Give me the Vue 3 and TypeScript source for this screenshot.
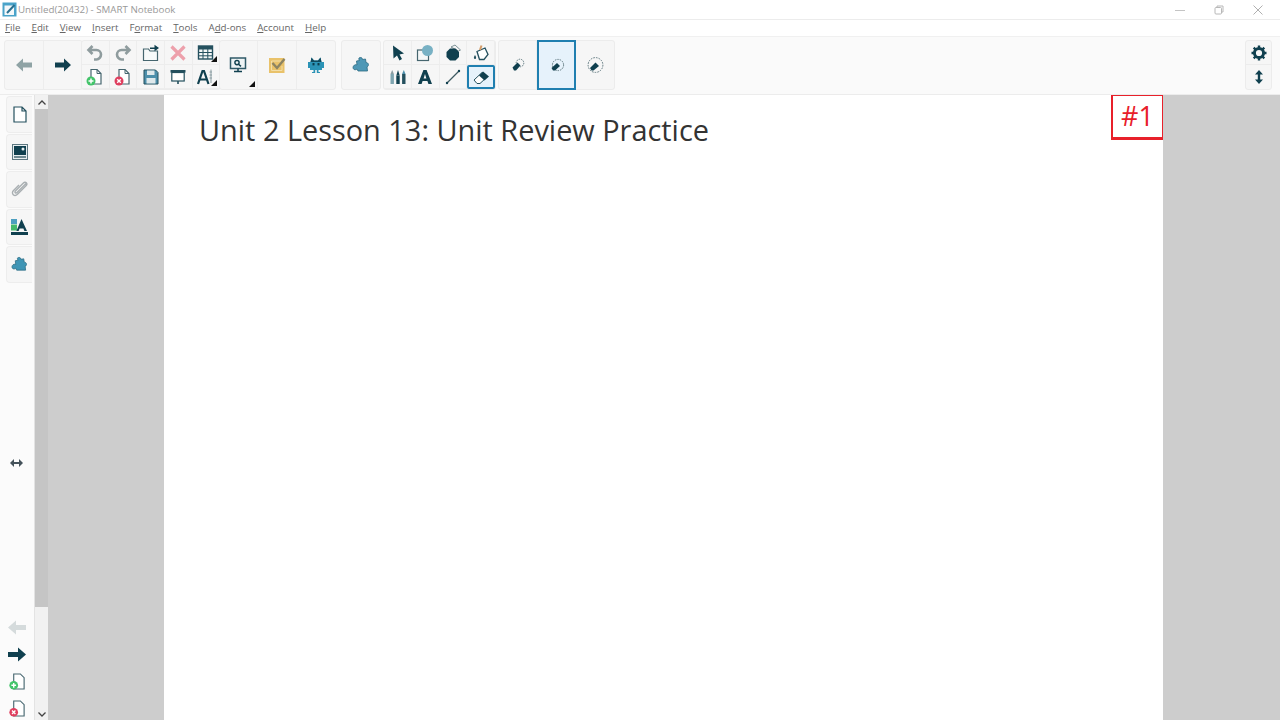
<script setup lang="ts">
const menus: { pre: string; key: string; post: string }[] = [
  { pre: '', key: 'F', post: 'ile' },
  { pre: '', key: 'E', post: 'dit' },
  { pre: '', key: 'V', post: 'iew' },
  { pre: '', key: 'I', post: 'nsert' },
  { pre: 'F', key: 'o', post: 'rmat' },
  { pre: '', key: 'T', post: 'ools' },
  { pre: 'A', key: 'd', post: 'd-ons' },
  { pre: '', key: 'A', post: 'ccount' },
  { pre: '', key: 'H', post: 'elp' },
]
</script>

<template>
  <div class="app">
    <header class="titlebar">
      <svg class="logo" width="15" height="15" viewBox="0 0 15 15">
        <rect x="0.5" y="0.5" width="14" height="14" fill="#4aa3c9" />
        <rect x="2.5" y="3.5" width="9.5" height="9.5" fill="#f4f8fa" />
        <path d="M5 11 L12.5 3" stroke="#2a6f8f" stroke-width="2" />
      </svg>
      <span class="doc-title">Untitled(20432) - SMART Notebook</span>
      <div class="winbtns">
        <svg width="10" height="10" viewBox="0 0 10 10"><path d="M0 5.5H10" stroke="#c4c4c4" /></svg>
        <svg width="10" height="10" viewBox="0 0 10 10" fill="none" stroke="#b8b8b8"><rect x="1" y="2.5" width="6.5" height="6.5" rx="1" /><path d="M3 2.5V1H9V7H7.5" /></svg>
        <svg width="10" height="10" viewBox="0 0 10 10"><path d="M.5 .5L9.5 9.5M9.5 .5L.5 9.5" stroke="#b0b0b0" /></svg>
      </div>
    </header>

    <nav class="menubar">
      <span v-for="m in menus" :key="m.pre + m.key + m.post" class="menu">{{ m.pre }}<u>{{ m.key }}</u>{{ m.post }}</span>
    </nav>

    <div class="toolbar">
      <div class="group">
        <button class="big">
          <svg width="18" height="16" viewBox="0 0 18 16"><path d="M1 8L8 1.5V5.5H17V10.5H8V14.5Z" fill="#8fa3a5" /></svg>
        </button>
        <button class="big">
          <svg width="18" height="16" viewBox="0 0 18 16"><path d="M17 8L10 1.5V5.5H1V10.5H10V14.5Z" fill="#10404f" /></svg>
        </button>
      </div>

      <div class="group grid five">
        <button>
          <svg width="18" height="18" viewBox="0 0 18 18" fill="none"><path d="M6.5 2L2.5 6L6.5 10M3 6H10.5C13 6 15 8 15 10.5C15 13 13 15.5 10.5 15.5H8" stroke="#8f9c9e" stroke-width="2.6" /></svg>
        </button>
        <button>
          <svg width="18" height="18" viewBox="0 0 18 18" fill="none"><path d="M11.5 2L15.5 6L11.5 10M15 6H7.5C5 6 3 8 3 10.5C3 13 5 15.5 7.5 15.5H10" stroke="#8f9c9e" stroke-width="2.6" /></svg>
        </button>
        <button>
          <svg width="18" height="18" viewBox="0 0 18 18" fill="none"><path d="M1.5 7V16.5H15.5V7H8L6.5 5H1.5Z" stroke="#46666f" stroke-width="1.2" fill="#f7fafa" /><path d="M8 3.5H12.5V.8L17 4L12.5 7.2V5H8Z" fill="#10404f" /></svg>
        </button>
        <button>
          <svg width="18" height="18" viewBox="0 0 18 18"><path d="M2.5 2.5L15.5 15.5M15.5 2.5L2.5 15.5" stroke="#eda0ab" stroke-width="3.2" /></svg>
        </button>
        <button class="corner">
          <svg width="18" height="18" viewBox="0 0 18 18" fill="none"><rect x="1.5" y="2" width="14" height="13" fill="#f5f8f8" stroke="#24505e" stroke-width="1.4" /><rect x="1.5" y="2" width="14" height="3.5" fill="#24505e" /><path d="M1.5 8.5H15.5M1.5 11.8H15.5M6 5V15M10.8 5V15" stroke="#24505e" /></svg>
        </button>
        <button>
          <svg width="18" height="18" viewBox="0 0 18 18"><path d="M5 1.5H11L15 5.5V16H5Z" fill="#fff" stroke="#46666f" stroke-width="1.2" /><path d="M11 1.5V5.5H15" fill="none" stroke="#46666f" /><circle cx="5" cy="13" r="4.5" fill="#43c46a" /><path d="M5 10.5V15.5M2.5 13H7.5" stroke="#fff" stroke-width="1.5" /></svg>
        </button>
        <button>
          <svg width="18" height="18" viewBox="0 0 18 18"><path d="M5 1.5H11L15 5.5V16H5Z" fill="#fff" stroke="#46666f" stroke-width="1.2" /><path d="M11 1.5V5.5H15" fill="none" stroke="#46666f" /><circle cx="5" cy="13" r="4.5" fill="#df3f5f" /><path d="M3.2 11.2L6.8 14.8M6.8 11.2L3.2 14.8" stroke="#fff" stroke-width="1.4" /></svg>
        </button>
        <button>
          <svg width="18" height="18" viewBox="0 0 18 18"><path d="M2 2H13.5L16 4.5V16H2Z" fill="#4d8fab" stroke="#24505e" /><rect x="5" y="2.5" width="7.5" height="4.5" fill="#dfe9ec" /><rect x="4.5" y="10" width="9" height="5.5" fill="#dfe9ec" /></svg>
        </button>
        <button>
          <svg width="18" height="18" viewBox="0 0 18 18" fill="none"><rect x="1.5" y="2" width="15" height="2.6" fill="#24505e" /><rect x="2.8" y="4.5" width="12.4" height="8.5" fill="#fff" stroke="#24505e" stroke-width="1.2" /><path d="M9 13V16" stroke="#24505e" stroke-width="1.6" /></svg>
        </button>
        <button class="corner">
          <svg width="18" height="18" viewBox="0 0 18 18" fill="none"><path d="M1 16L5.5 3H7L11.5 16M3 11.5H9.5" stroke="#10404f" stroke-width="2.2" /><path d="M14 1.5V15M12.5 4H15M12.5 7H15M12.5 10H15" stroke="#8a9ca1" /></svg>
        </button>
      </div>

      <div class="group trio">
        <button class="big corner">
          <svg width="18" height="18" viewBox="0 0 18 18" fill="none"><rect x="1.5" y="2" width="15" height="10.5" fill="#eef4f5" stroke="#2f5a68" stroke-width="1.5" /><circle cx="8" cy="6.6" r="2.1" stroke="#10404f" stroke-width="1.4" /><path d="M9.5 8.2L12 10.4M9 12.5V15M5 15.5H13" stroke="#10404f" stroke-width="1.5" /></svg>
        </button>
        <button class="big">
          <svg width="18" height="18" viewBox="0 0 18 18" fill="none"><rect x="1" y="2" width="15.5" height="15" fill="#e9c26a" /><path d="M3.5 5H13M3.5 5V14.5H14V10" stroke="#f3dea8" stroke-width="1" /><path d="M4.5 7L9 12L16.5 3" stroke="#8d8462" stroke-width="2.4" /></svg>
        </button>
        <button class="big">
          <svg width="18" height="18" viewBox="0 0 18 18"><path d="M4.5 1.5L7 4.5H11L13.5 1.5L14.5 6H17V12H15V14H11.5V16H13V17H9.8V14H8.2V17H5V16H6.5V14H3V12H1V6H3.5Z" fill="#2b93b6" /><path d="M4.5 1.5L7 4.5H11L13.5 1.5L14.5 6H3.5Z" fill="#0f4a5e" /><rect x="5.5" y="7" width="2" height="2.4" fill="#0c3d4d" /><rect x="10.5" y="7" width="2" height="2.4" fill="#0c3d4d" /></svg>
        </button>
      </div>

      <div class="group solo">
        <button class="big">
          <svg width="18" height="18" viewBox="0 0 18 18"><path d="M7 2C8.5 1 10.5 1.5 10.5 3.5L13.5 3L14 6.5C16.5 6.5 17.5 9.5 15 11L15.5 15H6L5 13C2.5 15 0 12.5 1.5 10C2.5 8.5 4 8.5 5 9L4.5 5L7.5 4.5C7 3.8 6.5 3 7 2Z" fill="#4f98b6" stroke="#2b6a82" stroke-width=".8" /></svg>
        </button>
      </div>

      <div class="group grid four">
        <button>
          <svg width="18" height="18" viewBox="0 0 18 18"><path d="M4 1.5L15 9.5L10.5 10.5L13 15L10.5 16.5L8 11.5L4.5 14.5Z" fill="#10404f" /></svg>
        </button>
        <button>
          <svg width="18" height="18" viewBox="0 0 18 18"><rect x="1.5" y="6" width="11" height="10.5" fill="#f4f7f7" stroke="#46666f" stroke-width="1.2" /><circle cx="11.5" cy="6.5" r="5.5" fill="#78b1c4" /></svg>
        </button>
        <button>
          <svg width="18" height="18" viewBox="0 0 18 18"><path d="M7 3L11 1L16.5 6L14.5 7Z" fill="#f4f4f4" stroke="#5f7a80" stroke-width=".8" /><path d="M6 4.5H11.5L15 8V13L11.5 16.5H6L2.5 13V8Z" fill="#10404f" /></svg>
        </button>
        <button>
          <svg width="18" height="18" viewBox="0 0 18 18" fill="none"><path d="M5 7.5L13 4L16 10.5L12 15.5H7.5Z" fill="#fff" stroke="#24505e" stroke-width="1.3" /><path d="M8 6L9.5 1.5" stroke="#d49b66" stroke-width="2" /><path d="M3 11C1.5 13 1.5 15 3 15C4.5 15 4.5 13 3 11Z" fill="#24505e" /></svg>
        </button>
        <button>
          <svg width="18" height="18" viewBox="0 0 18 18"><rect x="1.5" y="6" width="3.4" height="10" fill="#7ea5b0" /><path d="M1.5 6L3.2 2L4.9 6Z" fill="#8a9ca1" /><rect x="7.3" y="7.5" width="3.4" height="8.5" fill="#10404f" /><path d="M7.3 7.5L9 2L10.7 7.5Z" fill="#10404f" /><rect x="13.1" y="6" width="3.4" height="10" fill="#24505e" /><path d="M13.1 6L14.8 2L16.5 6Z" fill="#4d8fab" /></svg>
        </button>
        <button>
          <svg width="18" height="18" viewBox="0 0 18 18"><path d="M7.4 2H10.6L16 16H12.4L11.4 13H6.6L5.6 16H2Z M9 6L7.6 10.4H10.4Z" fill="#10404f" fill-rule="evenodd" /></svg>
        </button>
        <button>
          <svg width="18" height="18" viewBox="0 0 18 18"><path d="M3 15L15 3" stroke="#3f5a62" stroke-width="1.2" /><circle cx="3" cy="15" r="1.2" fill="#10404f" /><circle cx="15" cy="3" r="1.2" fill="#10404f" /></svg>
        </button>
        <button class="active">
          <svg width="18" height="18" viewBox="0 0 18 18"><path d="M2 12L10 4.5L15 9L8 15.5H5Z" fill="#fff" stroke="#24505e" /><path d="M7 7.5L11 3.5L17 8.5L12.5 12.5Z" fill="#10404f" /></svg>
        </button>
      </div>

      <div class="group">
        <button class="big">
          <svg width="14" height="14" viewBox="0 0 14 14" fill="none"><circle cx="9" cy="5" r="3.8" stroke="#5f787f" stroke-width="1" stroke-dasharray="1.4 .9" /><path d="M1.5 9.5L6.5 4.5L9.5 7.5L5 12.5H3Z" fill="#10404f" /></svg>
        </button>
        <button class="big selected">
          <svg width="16" height="16" viewBox="0 0 16 16" fill="none"><circle cx="9" cy="8" r="5.6" stroke="#5f787f" stroke-width="1" stroke-dasharray="1.5 1" /><path d="M2.5 11L8 6L11 9L6 13.5H4Z" fill="#10404f" /></svg>
        </button>
        <button class="big">
          <svg width="18" height="18" viewBox="0 0 18 18" fill="none"><circle cx="9.5" cy="9" r="7.4" stroke="#5f787f" stroke-width="1" stroke-dasharray="1.6 1.1" /><path d="M4 12L9.5 6.5L13 10L7.5 14.5H5.5Z" fill="#10404f" /></svg>
        </button>
      </div>

      <div class="group settings">
        <button>
          <svg width="16" height="16" viewBox="0 0 16 16" fill="none"><circle cx="8" cy="8" r="4.6" stroke="#10404f" stroke-width="3" /><path d="M8 .5V3M8 13V15.5M.5 8H3M13 8H15.5M2.7 2.7L4.5 4.5M11.5 11.5L13.3 13.3M13.3 2.7L11.5 4.5M4.5 11.5L2.7 13.3" stroke="#10404f" stroke-width="2.4" /></svg>
        </button>
        <button>
          <svg width="10" height="14" viewBox="0 0 10 14"><path d="M5 0L9 4.5H6.2V9.5H9L5 14L1 9.5H3.8V4.5H1Z" fill="#10404f" /></svg>
        </button>
      </div>
    </div>

    <main class="workspace">
      <aside class="rail">
        <div class="tabs">
          <button>
            <svg width="14" height="17" viewBox="0 0 14 17"><path d="M1 1H9L13 5V16H1Z M9 1V5H13" fill="#fff" stroke="#24505e" stroke-width="1.2" /></svg>
          </button>
          <button>
            <svg width="16" height="16" viewBox="0 0 16 16"><rect x=".5" y=".5" width="15" height="15" fill="#e7eef0" stroke="#5c7780" /><rect x="2" y="2" width="12" height="9" fill="#10404f" /><circle cx="11" cy="5" r="1.5" fill="#e7eef0" /><rect x="2" y="12" width="12" height="2" fill="#6f8a92" /></svg>
          </button>
          <button>
            <svg width="18" height="18" viewBox="0 0 18 18" fill="none"><path d="M15 3.5L6 12.5C4.8 13.7 3.2 12.2 4.4 11L12.4 3C14.5 .9 17.2 3.6 15 5.8L6.5 14.3C3.5 17.3 -.5 13.5 2.5 10.5L8 5" stroke="#a9afb2" stroke-width="1.4" /></svg>
          </button>
          <button>
            <svg width="17" height="18" viewBox="0 0 17 18"><rect x="0" y="1" width="6" height="5" fill="#4d9fc0" /><rect x="0" y="6.5" width="6" height="6" fill="#45b96c" /><path d="M10.5 1L16 13H13.4L12.4 10.4H8.6L7.6 13H5.4Z" fill="#10404f" /><rect x="0" y="14" width="17" height="3" fill="#10404f" /></svg>
          </button>
          <button>
            <svg width="17" height="17" viewBox="0 0 18 18"><path d="M7 2C8.5 1 10.5 1.5 10.5 3.5L13.5 3L14 6.5C16.5 6.5 17.5 9.5 15 11L15.5 15H6L5 13C2.5 15 0 12.5 1.5 10C2.5 8.5 4 8.5 5 9L4.5 5L7.5 4.5C7 3.8 6.5 3 7 2Z" fill="#3f95b5" stroke="#2b6a82" stroke-width=".8" /></svg>
          </button>
        </div>
        <div class="resize">
          <svg width="13" height="8" viewBox="0 0 13 8"><path d="M0 4L4 0V3H9V0L13 4L9 8V5H4V8Z" fill="#44525a" /></svg>
        </div>
        <div class="page-nav">
          <svg width="20" height="17" viewBox="0 0 20 16"><path d="M1 8L9 1V5.5H19V10.5H9V15Z" fill="#d5dbdc" /></svg>
          <svg width="20" height="17" viewBox="0 0 20 16"><path d="M19 8L11 1V5.5H1V10.5H11V15Z" fill="#10404f" /></svg>
          <svg width="17" height="17" viewBox="0 0 18 18"><path d="M5 1H12L16 5V17H5Z" fill="#fff" stroke="#46666f" stroke-width="1.2" /><circle cx="5" cy="13" r="4.6" fill="#43c46a" /><path d="M5 10.5V15.5M2.5 13H7.5" stroke="#fff" stroke-width="1.5" /></svg>
          <svg width="17" height="17" viewBox="0 0 18 18"><path d="M5 1H12L16 5V17H5Z" fill="#fff" stroke="#46666f" stroke-width="1.2" /><circle cx="5" cy="13" r="4.6" fill="#df3f5f" /><path d="M3.2 11.2L6.8 14.8M6.8 11.2L3.2 14.8" stroke="#fff" stroke-width="1.4" /></svg>
        </div>
      </aside>

      <div class="scrollbar">
        <svg class="chev" width="8" height="5" viewBox="0 0 8 5"><path d="M.5 4.5L4 1L7.5 4.5" fill="none" stroke="#444" stroke-width="1.3" /></svg>
        <div class="thumb-wrap"><div class="thumb"></div></div>
        <svg class="chev" width="8" height="5" viewBox="0 0 8 5"><path d="M.5 .5L4 4L7.5 .5" fill="none" stroke="#444" stroke-width="1.3" /></svg>
      </div>

      <section class="canvas">
        <article class="page">
          <h1>Unit 2 Lesson 13: Unit Review Practice</h1>
          <div class="badge">#1</div>
        </article>
      </section>
    </main>
  </div>
</template>

<style scoped>
.app {
  width: 1280px;
  height: 720px;
  display: flex;
  flex-direction: column;
  overflow: hidden;
  background: #fff;
  font-family: "Open Sans", "Noto Sans", sans-serif;
}
button {
  padding: 0;
  margin: 0;
  border: 0;
  background: none;
  display: flex;
  align-items: center;
  justify-content: center;
}
.titlebar {
  height: 19px;
  flex: none;
  display: flex;
  align-items: center;
  padding-left: 2px;
  font-size: 9.75px;
  color: #999;
}
.logo {
  margin-right: 1px;
}
.doc-title {
  white-space: nowrap;
}
.winbtns {
  margin-left: auto;
  width: 105px;
  padding-right: 17px;
  box-sizing: border-box;
  display: flex;
  justify-content: space-between;
}
.menubar {
  height: 17px;
  flex: none;
  display: flex;
  gap: 11px;
  align-items: center;
  padding: 0 0 2px 5px;
  border-top: 1px solid #ececec;
  box-sizing: border-box;
  font-size: 9.75px;
  color: #666;
}
.menu {
  white-space: nowrap;
}
.toolbar {
  height: 59px;
  flex: none;
  box-sizing: border-box;
  padding: 3px 8px 4px 4px;
  display: flex;
  background: #fafafa;
  border-top: 1px solid #f0f0f0;
  border-bottom: 1px solid #ececec;
}
.group {
  display: flex;
  background: #f6f6f6;
  border: 1px solid #ececec;
  border-radius: 3px;
  height: 50px;
  box-sizing: border-box;
}
.big {
  width: 38.5px;
  height: 100%;
  flex: none;
  position: relative;
  border-right: 1px solid #ededed;
  box-sizing: border-box;
}
.big:last-child {
  border-right: 0;
}
.selected {
  height: 50px;
  margin-top: -1px;
  border: 2px solid #1f7fb0;
  background: #e6f2fb;
}
.grid {
  display: grid;
  grid-template-rows: 1fr 1fr;
}
.grid button {
  border-right: 1px solid #ededed;
  border-bottom: 1px solid #ededed;
  box-sizing: border-box;
  position: relative;
}
.five {
  grid-template-columns: repeat(5, 27.7px);
  margin-left: -2px;
}
.trio {
  margin-left: -2.75px;
}
.solo {
  margin-left: 4.5px;
}
.four {
  grid-template-columns: repeat(4, 27.7px);
  margin-left: 2px;
  margin-right: 2px;
}
.corner::after {
  content: "";
  position: absolute;
  right: 2px;
  bottom: 2px;
  width: 0;
  height: 0;
  border-left: 6px solid transparent;
  border-bottom: 6px solid #111;
}
.grid .active {
  border: 2px solid #1f7fb0;
  background: #e6f2fb;
  border-radius: 2px;
}
.settings {
  margin-left: auto;
  width: 27px;
  flex-direction: column;
  background: #f6f6f6;
}
.settings button {
  height: 50%;
  border-bottom: 1px solid #ececec;
}
.settings button:last-child {
  border-bottom: 0;
}
.workspace {
  flex: 1;
  min-height: 0;
  display: flex;
}
.rail {
  width: 35px;
  flex: none;
  background: #fbfbfb;
  border-right: 1px solid #e3e3e3;
  box-sizing: border-box;
  display: flex;
  flex-direction: column;
  align-items: center;
  padding-top: 1px;
}
.tabs {
  display: flex;
  flex-direction: column;
  gap: 1.1px;
  align-self: flex-start;
  margin-left: 6px;
}
.tabs button {
  width: 26px;
  height: 36.5px;
  background: #f6f6f6;
  border: 1px solid #ededed;
  border-right: 0;
  border-radius: 4px 0 0 4px;
  box-sizing: border-box;
}
.resize {
  margin-top: 176.6px;
  margin-right: 2px;
  height: 8px;
  display: flex;
}
.page-nav {
  margin-top: 152px;
  display: flex;
  flex-direction: column;
  align-items: center;
  gap: 10px;
}
.scrollbar {
  width: 13px;
  flex: none;
  display: flex;
  flex-direction: column;
  align-items: center;
  background: #f1f1f1;
  padding: 5px 0 3px;
  box-sizing: border-box;
}
.thumb-wrap {
  flex: 1;
  width: 100%;
  margin-top: 4px;
  margin-bottom: 4px;
}
.thumb {
  height: 498px;
  background: #c5c5c5;
}
.canvas {
  flex: 1;
  min-width: 0;
  background: #cdcdcd;
  padding-left: 116px;
}
.page {
  width: 999px;
  height: 100%;
  background: #fff;
  position: relative;
  box-sizing: border-box;
  padding: 15px 0 0 35px;
}
h1 {
  margin: 0;
  font-size: 28.9px;
  font-weight: 400;
  line-height: 40px;
  color: #333;
  white-space: nowrap;
}
.badge {
  position: absolute;
  top: 0;
  right: 0;
  width: 52px;
  height: 45px;
  box-sizing: border-box;
  border: 1px solid #e8202a;
  border-left-width: 2px;
  border-bottom-width: 3px;
  color: #e8202a;
  font-size: 27px;
  line-height: 40px;
  text-align: center;
}
</style>

<style>
html,
body {
  margin: 0;
  background: #fff;
}
</style>
